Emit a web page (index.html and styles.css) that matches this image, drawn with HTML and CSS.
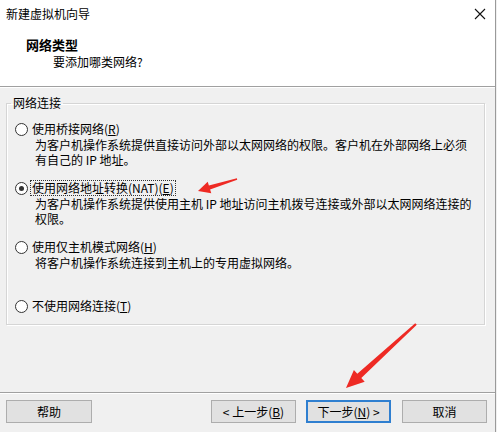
FILE: index.html
```html
<!DOCTYPE html>
<html lang="zh-CN">
<head>
<meta charset="utf-8">
<title>新建虚拟机向导</title>
<link rel="stylesheet" href="styles.css">
</head>
<body>
<div class="window">
  <div class="top">
    <div class="titlebar">
      <span class="title">新建虚拟机向导</span>
      <svg class="close" width="12" height="12" viewBox="0 0 12 12"><path d="M1 1 L11 11 M11 1 L1 11" stroke="#111" stroke-width="1.1" fill="none"/></svg>
    </div>
    <div class="header">
      <div class="h-title">网络类型</div>
      <div class="h-sub">要添加哪类网络?</div>
    </div>
  </div>
  <div class="content">
    <fieldset class="group">
      <legend class="group-label">网络连接</legend>
      <div class="option">
        <div class="opt-row"><span class="radio"></span><span class="opt-label">使用桥接网络(<u>R</u>)</span></div>
        <div class="opt-desc">为客户机操作系统提供直接访问外部以太网网络的权限。客户机在外部网络上必须有自己的 IP 地址。</div>
      </div>
      <div class="option">
        <div class="opt-row"><span class="radio checked"></span><span class="opt-label focus">使用网络地址转换(NAT)(<u>E</u>)</span></div>
        <div class="opt-desc">为客户机操作系统提供使用主机 IP 地址访问主机拨号连接或外部以太网网络连接的权限。</div>
      </div>
      <div class="option">
        <div class="opt-row"><span class="radio"></span><span class="opt-label">使用仅主机模式网络(<u>H</u>)</span></div>
        <div class="opt-desc">将客户机操作系统连接到主机上的专用虚拟网络。</div>
      </div>
      <div class="option">
        <div class="opt-row"><span class="radio"></span><span class="opt-label">不使用网络连接(<u>T</u>)</span></div>
      </div>
    </fieldset>
  </div>
  <div class="footer">
    <button class="btn">帮助</button>
    <div class="nav">
      <button class="btn">&lt; 上一步(<u>B</u>)</button>
      <button class="btn default">下一步(<u>N</u>) &gt;</button>
      <button class="btn cancel">取消</button>
    </div>
  </div>
  <svg class="arrows" width="497" height="432" viewBox="0 0 497 432">
    <polygon fill="#ee2a24" points="198,191 207.7,181.8 208.9,185.6 236.9,178.3 237.2,179.8 210.1,189.4 211.3,193.2"/>
    <polygon fill="#ee2a24" points="346,388 353.9,370 357.3,373.7 415.2,323.2 416.8,324.8 361.3,378.1 364.7,381.8"/>
  </svg>
</div>
</body>
</html>
```

FILE: styles.css
```css
html, body {
  margin: 0;
  padding: 0;
  background: #f0f0f0;
}
body {
  font-family: "Noto Sans CJK SC", "Microsoft YaHei", sans-serif;
  font-size: 12px;
  color: #000;
}
.window {
  position: relative;
  width: 495px;
  height: 432px;
  border-right: 1px solid #9a9a9a;
  background: #f0f0f0;
  display: flex;
  flex-direction: column;
  overflow: hidden;
}
.top {
  background: #fff;
  height: 86px;
  border-bottom: 1px solid #a0a0a0;
  flex: none;
}
.titlebar {
  height: 28px;
  display: flex;
  align-items: center;
  justify-content: space-between;
  padding: 0 9px 0 6px;
}
.title {
  line-height: 28px;
}
.close {
  display: block;
}
.header {
  padding: 9px 0 0 26px;
}
.h-title {
  font-weight: bold;
  font-size: 13px;
  line-height: 16px;
}
.h-sub {
  line-height: 18px;
  padding-left: 27px;
}
.content {
  flex: none;
  height: 305px;
  box-shadow: inset 0 1px 0 #fff;
  padding: 8px 0 0 6px;
  box-sizing: border-box;
}
.group {
  margin: 0;
  width: 479px;
  box-sizing: border-box;
  border: 1px solid #d5d5d5;
  box-shadow: 1px 1px 0 #fff, inset 1px 1px 0 #fff;
  padding: 10px 8px 10px 8px;
  display: flex;
  flex-direction: column;
  gap: 13px;
}
.group-label {
  padding: 0 2px;
  margin-left: -4px;
  line-height: 16px;
}
.option {
  display: flex;
  flex-direction: column;
}
.opt-row {
  display: flex;
  align-items: center;
  height: 16px;
}
.radio {
  width: 11px;
  height: 11px;
  border: 1px solid #333;
  border-radius: 50%;
  background: #fff;
  box-sizing: content-box;
  margin-right: 3px;
  position: relative;
  flex: none;
}
.radio.checked::after {
  content: "";
  position: absolute;
  left: 3px;
  top: 3px;
  width: 5px;
  height: 5px;
  border-radius: 50%;
  background: #333;
}
.opt-label {
  line-height: 14px;
  padding: 0 1px;
  border: 1px dotted transparent;
  margin-left: -1px;
}
.opt-label.focus {
  border-color: #333;
}
.opt-desc {
  margin-left: 20px;
  line-height: 15px;
  min-height: 30px;
  width: 440px;
}
u {
  text-decoration: underline;
  text-underline-offset: 1px;
}
.footer {
  flex: none;
  border-top: 1px solid #a0a0a0;
  box-shadow: inset 0 1px 0 #fff;
  height: 37px;
  border-bottom: 1px solid #8a8a8a;
  display: flex;
  align-items: flex-start;
  justify-content: space-between;
  padding: 7px 8px 0 6px;
  box-sizing: content-box;
}
.nav {
  display: flex;
  gap: 10px;
}
.btn {
  font-family: inherit;
  font-size: 12px;
  width: 86px;
  height: 23px;
  padding: 0;
  margin: 0;
  background: #e1e1e1;
  border: 1px solid #adadad;
  color: #000;
  line-height: 20px;
}
.nav .btn {
  width: 85px;
}
.btn.default {
  border: 2px solid #2f7fd0;
}
.btn.cancel {
  margin-left: 1px;
}
.arrows {
  position: absolute;
  left: 0;
  top: 0;
  pointer-events: none;
}
```
